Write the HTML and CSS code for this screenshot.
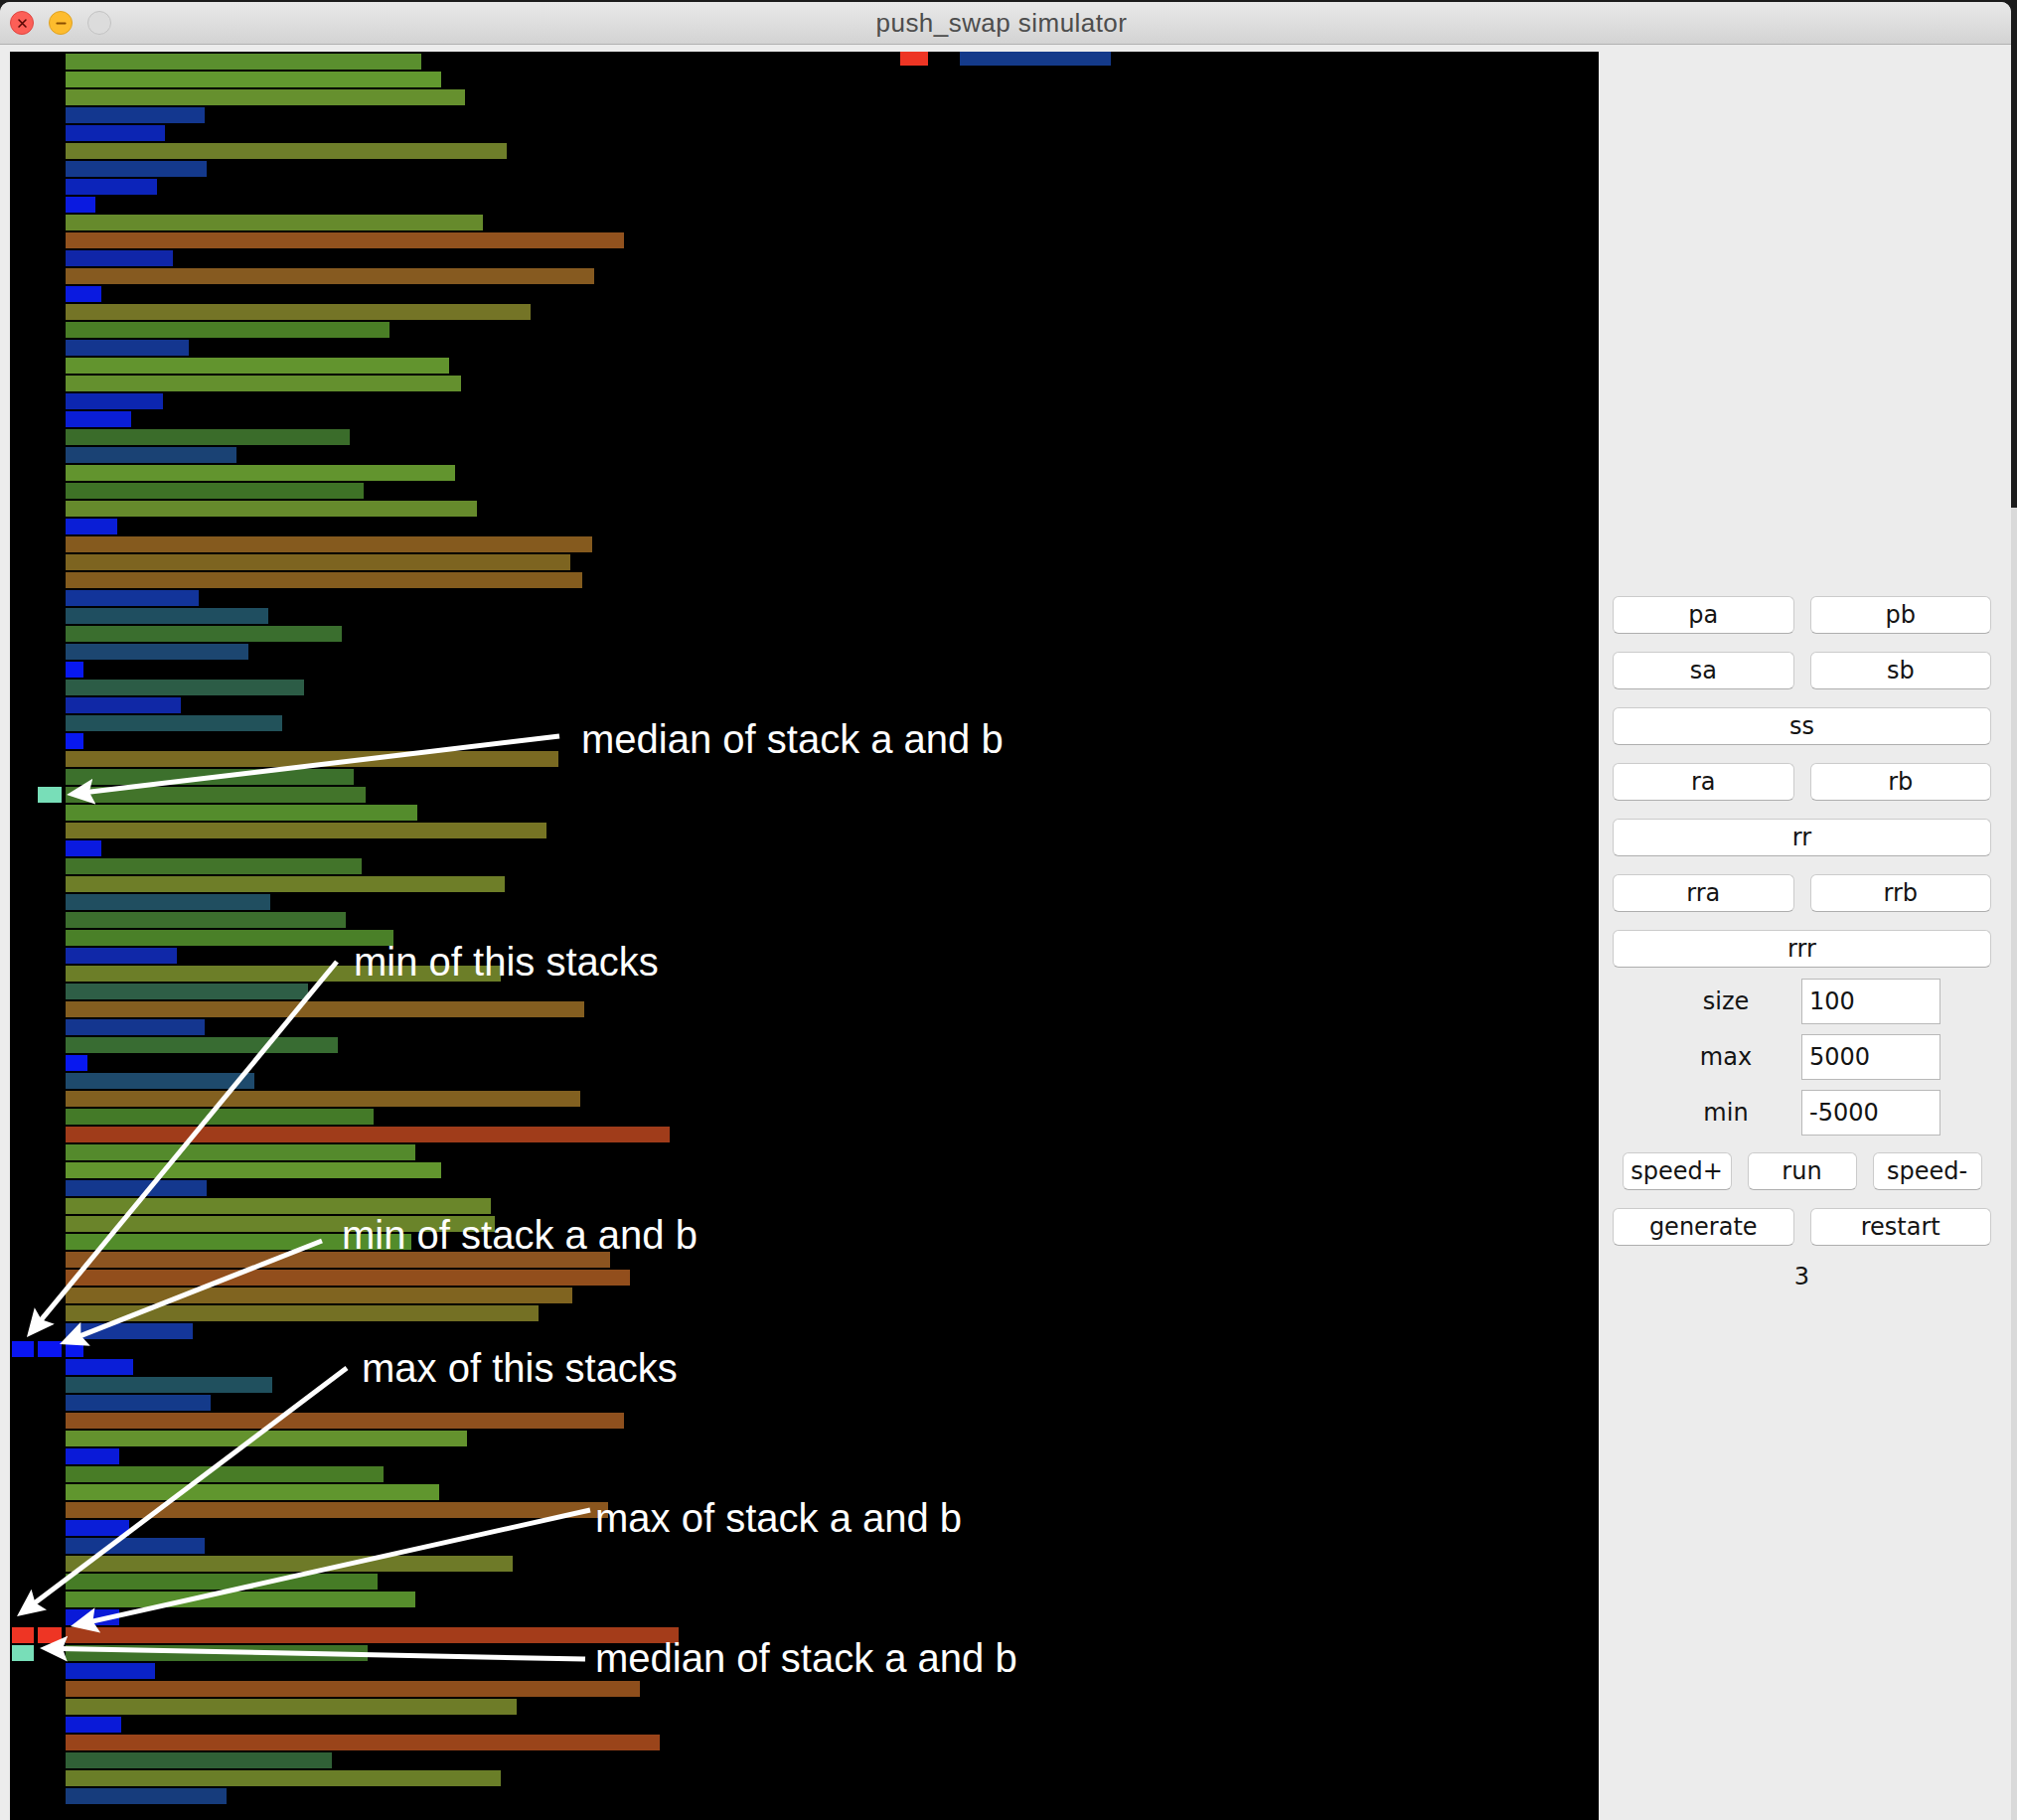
FILE: index.html
```html
<!DOCTYPE html>
<html lang="en">
<head>
<meta charset="utf-8">
<title>push_swap simulator</title>
<link rel="stylesheet" href="styles.css">
</head>
<body>
<div class="window">
  <header class="titlebar">
    <div class="lights">
      <span class="light light-close"><svg viewBox="0 0 12 12" width="13" height="13"><path d="M2.8 2.8 L9.2 9.2 M9.2 2.8 L2.8 9.2" stroke="#5a0805" stroke-width="1.5" stroke-linecap="round"/></svg></span>
      <span class="light light-min"><svg viewBox="0 0 12 12" width="13" height="13"><path d="M2.2 6 H9.8" stroke="#8a4d00" stroke-width="1.8" stroke-linecap="round"/></svg></span>
      <span class="light light-zoom"></span>
    </div>
    <div class="title">push_swap simulator</div>
    <div></div>
  </header>
  <div class="content">
    <div class="canvas">
      <div class="stack stack-a">
        <div class="row"><b class="bar" style="width:358px;background:#5a8f2e"></b></div>
        <div class="row"><b class="bar" style="width:378px;background:#62992f"></b></div>
        <div class="row"><b class="bar" style="width:402px;background:#66902e"></b></div>
        <div class="row"><b class="bar" style="width:140px;background:#13378f"></b></div>
        <div class="row"><b class="bar" style="width:100px;background:#0c25b3"></b></div>
        <div class="row"><b class="bar" style="width:444px;background:#6e7e2a"></b></div>
        <div class="row"><b class="bar" style="width:142px;background:#14398c"></b></div>
        <div class="row"><b class="bar" style="width:92px;background:#0c24ba"></b></div>
        <div class="row"><b class="bar" style="width:30px;background:#0a1ae0"></b></div>
        <div class="row"><b class="bar" style="width:420px;background:#668a2c"></b></div>
        <div class="row"><b class="bar" style="width:562px;background:#92521e"></b></div>
        <div class="row"><b class="bar" style="width:108px;background:#1026a8"></b></div>
        <div class="row"><b class="bar" style="width:532px;background:#865a20"></b></div>
        <div class="row"><b class="bar" style="width:36px;background:#0a1ae0"></b></div>
        <div class="row"><b class="bar" style="width:468px;background:#747426"></b></div>
        <div class="row"><b class="bar" style="width:326px;background:#4a7e26"></b></div>
        <div class="row"><b class="bar" style="width:124px;background:#14368f"></b></div>
        <div class="row"><b class="bar" style="width:386px;background:#62942e"></b></div>
        <div class="row"><b class="bar" style="width:398px;background:#64902e"></b></div>
        <div class="row"><b class="bar" style="width:98px;background:#0c26b0"></b></div>
        <div class="row"><b class="bar" style="width:66px;background:#0a1ed6"></b></div>
        <div class="row"><b class="bar" style="width:286px;background:#3a6c2a"></b></div>
        <div class="row"><b class="bar" style="width:172px;background:#1a4274"></b></div>
        <div class="row"><b class="bar" style="width:392px;background:#62942e"></b></div>
        <div class="row"><b class="bar" style="width:300px;background:#3e7226"></b></div>
        <div class="row"><b class="bar" style="width:414px;background:#668a2c"></b></div>
        <div class="row"><b class="bar" style="width:52px;background:#0a1ed6"></b></div>
        <div class="row"><b class="bar" style="width:530px;background:#855a1e"></b></div>
        <div class="row"><b class="bar" style="width:508px;background:#7d6420"></b></div>
        <div class="row"><b class="bar" style="width:520px;background:#845c1e"></b></div>
        <div class="row"><b class="bar" style="width:134px;background:#12349a"></b></div>
        <div class="row"><b class="bar" style="width:204px;background:#1f4e60"></b></div>
        <div class="row"><b class="bar" style="width:278px;background:#3a6e2e"></b></div>
        <div class="row"><b class="bar" style="width:184px;background:#1c4670"></b></div>
        <div class="row"><b class="bar" style="width:18px;background:#0818f0"></b></div>
        <div class="row"><b class="bar" style="width:240px;background:#2c5c46"></b></div>
        <div class="row"><b class="bar" style="width:116px;background:#1028a6"></b></div>
        <div class="row"><b class="bar" style="width:218px;background:#22525a"></b></div>
        <div class="row"><b class="bar" style="width:18px;background:#0818f0"></b></div>
        <div class="row"><b class="bar" style="width:496px;background:#7a6a22"></b></div>
        <div class="row"><b class="bar" style="width:290px;background:#3c702c"></b></div>
        <div class="row"><i class="mark m2 med"></i><b class="bar" style="width:302px;background:#42742a"></b></div>
        <div class="row"><b class="bar" style="width:354px;background:#548c2c"></b></div>
        <div class="row"><b class="bar" style="width:484px;background:#767424"></b></div>
        <div class="row"><b class="bar" style="width:36px;background:#0a1ae0"></b></div>
        <div class="row"><b class="bar" style="width:298px;background:#42742a"></b></div>
        <div class="row"><b class="bar" style="width:442px;background:#6e7e28"></b></div>
        <div class="row"><b class="bar" style="width:206px;background:#204e60"></b></div>
        <div class="row"><b class="bar" style="width:282px;background:#3c6e2e"></b></div>
        <div class="row"><b class="bar" style="width:330px;background:#4a8028"></b></div>
        <div class="row"><b class="bar" style="width:112px;background:#1028a8"></b></div>
        <div class="row"><b class="bar" style="width:438px;background:#6c7e28"></b></div>
        <div class="row"><b class="bar" style="width:244px;background:#2e5e46"></b></div>
        <div class="row"><b class="bar" style="width:522px;background:#845e20"></b></div>
        <div class="row"><b class="bar" style="width:140px;background:#14368f"></b></div>
        <div class="row"><b class="bar" style="width:274px;background:#386c32"></b></div>
        <div class="row"><b class="bar" style="width:22px;background:#0818f0"></b></div>
        <div class="row"><b class="bar" style="width:190px;background:#1e4a6c"></b></div>
        <div class="row"><b class="bar" style="width:518px;background:#826020"></b></div>
        <div class="row"><b class="bar" style="width:310px;background:#447a28"></b></div>
        <div class="row"><b class="bar" style="width:608px;background:#a03c1a"></b></div>
        <div class="row"><b class="bar" style="width:352px;background:#548a2c"></b></div>
        <div class="row"><b class="bar" style="width:378px;background:#62962e"></b></div>
        <div class="row"><b class="bar" style="width:142px;background:#14388e"></b></div>
        <div class="row"><b class="bar" style="width:428px;background:#6a862a"></b></div>
        <div class="row"><b class="bar" style="width:432px;background:#6a842a"></b></div>
        <div class="row"><b class="bar" style="width:348px;background:#528c2a"></b></div>
        <div class="row"><b class="bar" style="width:548px;background:#8c5420"></b></div>
        <div class="row"><b class="bar" style="width:568px;background:#924e1c"></b></div>
        <div class="row"><b class="bar" style="width:510px;background:#806420"></b></div>
        <div class="row"><b class="bar" style="width:476px;background:#747024"></b></div>
        <div class="row"><b class="bar" style="width:128px;background:#14369a"></b></div>
        <div class="row"><i class="mark m1 min"></i><i class="mark m2 min"></i><b class="bar" style="width:18px;background:#0818f0"></b></div>
        <div class="row"><b class="bar" style="width:68px;background:#0a1ed8"></b></div>
        <div class="row"><b class="bar" style="width:208px;background:#20505e"></b></div>
        <div class="row"><b class="bar" style="width:146px;background:#143a8a"></b></div>
        <div class="row"><b class="bar" style="width:562px;background:#8e501e"></b></div>
        <div class="row"><b class="bar" style="width:404px;background:#64922e"></b></div>
        <div class="row"><b class="bar" style="width:54px;background:#0a1ad8"></b></div>
        <div class="row"><b class="bar" style="width:320px;background:#487c26"></b></div>
        <div class="row"><b class="bar" style="width:376px;background:#60962e"></b></div>
        <div class="row"><b class="bar" style="width:546px;background:#8a561e"></b></div>
        <div class="row"><b class="bar" style="width:64px;background:#0a1ed8"></b></div>
        <div class="row"><b class="bar" style="width:140px;background:#13378f"></b></div>
        <div class="row"><b class="bar" style="width:450px;background:#6e7a28"></b></div>
        <div class="row"><b class="bar" style="width:314px;background:#467c26"></b></div>
        <div class="row"><b class="bar" style="width:352px;background:#568e2c"></b></div>
        <div class="row"><b class="bar" style="width:54px;background:#0a1ad8"></b></div>
        <div class="row"><i class="mark m1 max"></i><i class="mark m2 max"></i><b class="bar" style="width:617px;background:#a43c1a"></b></div>
        <div class="row"><i class="mark m1 med"></i><b class="bar" style="width:304px;background:#3e7228"></b></div>
        <div class="row"><b class="bar" style="width:90px;background:#0a22c8"></b></div>
        <div class="row"><b class="bar" style="width:578px;background:#8e4e1c"></b></div>
        <div class="row"><b class="bar" style="width:454px;background:#6e7c28"></b></div>
        <div class="row"><b class="bar" style="width:56px;background:#0a1ad8"></b></div>
        <div class="row"><b class="bar" style="width:598px;background:#9a441a"></b></div>
        <div class="row"><b class="bar" style="width:268px;background:#306036"></b></div>
        <div class="row"><b class="bar" style="width:438px;background:#6a7e28"></b></div>
        <div class="row"><b class="bar" style="width:162px;background:#163c7c"></b></div>
      </div>
      <div class="stack stack-b">
        <div class="row-b"><i class="mark-b max"></i><b class="bar" style="width:152px;background:#143a8a"></b></div>
      </div>

      <svg class="arrows" viewBox="0 0 1599 1780" width="1599" height="1780" aria-hidden="true">
        <defs>
          <marker id="head" markerUnits="userSpaceOnUse" markerWidth="30" markerHeight="28" refX="8" refY="13" orient="auto">
            <path d="M0 0 L28 13 L0 26 L5 13 Z" fill="#fff"/>
          </marker>
        </defs>
        <g stroke="#fff" stroke-width="5" marker-end="url(#head)">
          <line x1="553" y1="689" x2="76.9" y2="745.6"/>
          <line x1="329" y1="916" x2="29.7" y2="1278.6"/>
          <line x1="314" y1="1197" x2="68.6" y2="1293.7"/>
          <line x1="339" y1="1325" x2="23" y2="1563"/>
          <line x1="584" y1="1468" x2="80.5" y2="1580.6"/>
          <line x1="579" y1="1618" x2="50" y2="1607.4"/>
        </g>
      </svg>
      <div class="note note-med-top">median of stack a and b</div>
      <div class="note note-min-this">min of this stacks</div>
      <div class="note note-min-ab">min of stack a and b</div>
      <div class="note note-max-this">max of this stacks</div>
      <div class="note note-max-ab">max of stack a and b</div>
      <div class="note note-med-bot">median of stack a and b</div>
    </div>

    <aside class="panel">
      <div class="ops">
        <button class="btn">pa</button>
        <button class="btn">pb</button>
        <button class="btn">sa</button>
        <button class="btn">sb</button>
        <button class="btn wide">ss</button>
        <button class="btn">ra</button>
        <button class="btn">rb</button>
        <button class="btn wide">rr</button>
        <button class="btn">rra</button>
        <button class="btn">rrb</button>
        <button class="btn wide">rrr</button>
      </div>
      <div class="fields">
        <label class="field"><span class="field-label">size</span><input class="inp" value="100"></label>
        <label class="field"><span class="field-label">max</span><input class="inp" value="5000"></label>
        <label class="field"><span class="field-label">min</span><input class="inp" value="-5000"></label>
      </div>
      <div class="speed">
        <button class="btn small">speed+</button>
        <button class="btn small">run</button>
        <button class="btn small">speed-</button>
      </div>
      <div class="gen">
        <button class="btn">generate</button>
        <button class="btn">restart</button>
      </div>
      <div class="count">3</div>
    </aside>
  </div>
</div>
</body>
</html>
```

FILE: styles.css
```css
html, body {
  margin: 0;
  padding: 0;
}
body {
  width: 2030px;
  height: 1832px;
  overflow: hidden;
  display: flex;
  background: linear-gradient(#1c1c1c 0 511px, #d9d9d9 511px);
  font-family: "DejaVu Sans", "Liberation Sans", sans-serif;
}
.window {
  width: 2024px;
  height: 1830px;
  margin-top: 2px;
  background: #ececec;
  border-radius: 10px 10px 0 0;
  overflow: hidden;
  display: flex;
  flex-direction: column;
}
.titlebar {
  flex: none;
  height: 42px;
  border-bottom: 1px solid #b1b1b1;
  background: linear-gradient(#e9e9e9, #d3d3d3);
  display: grid;
  grid-template-columns: 1fr auto 1fr;
  align-items: center;
}
.lights {
  display: flex;
  gap: 15px;
  padding-left: 10px;
}
.light {
  width: 24px;
  height: 24px;
  border-radius: 50%;
  box-sizing: border-box;
  display: flex;
  align-items: center;
  justify-content: center;
}
.light-close { background: #fc5f57; border: 1px solid #de4640; }
.light-min { background: #fdbc2e; border: 1px solid #dea123; }
.light-zoom { background: #dcdcdc; border: 1px solid #c2c2c2; }
.title {
  font-family: "Liberation Sans", Arial, sans-serif;
  font-size: 26px;
  color: #4d4d4d;
  letter-spacing: 0.45px;
  margin-right: 8px;
}
.content {
  flex: 1;
  display: flex;
  padding: 7px 0 0 10px;
  min-height: 0;
}
.canvas {
  width: 1599px;
  flex: none;
  background: #000;
  position: relative;
  overflow: hidden;
  display: flex;
  align-items: flex-start;
}
.stack {
  display: flex;
  flex-direction: column;
  gap: 2px;
}
.stack-a {
  width: 894px;
  padding: 2px 0 0 2px;
}
.stack-b {
  margin-top: -2px;
}
.row {
  display: grid;
  grid-template-columns: 22px 24px auto;
  column-gap: 4px;
  height: 16px;
}
.bar {
  display: block;
  height: 16px;
  grid-row: 1;
  grid-column: 3;
}
.mark {
  display: block;
  height: 16px;
  grid-row: 1;
}
.m1 { grid-column: 1; }
.m2 { grid-column: 2; }
.min { background: #0a16f2; }
.max { background: #ee3524; }
.med { background: #78deb8; }
.row-b {
  display: flex;
  gap: 32px;
  height: 16px;
}
.mark-b {
  display: block;
  width: 28px;
  height: 16px;
}
.arrows {
  position: absolute;
  left: 0;
  top: 0;
  pointer-events: none;
}
.note {
  position: absolute;
  color: #fff;
  font-family: "Liberation Sans", Arial, sans-serif;
  font-size: 40px;
  line-height: 40px;
  white-space: nowrap;
}
.note-med-top { left: 575px; top: 672px; }
.note-min-this { left: 346px; top: 896px; }
.note-min-ab { left: 334px; top: 1171px; }
.note-max-this { left: 354px; top: 1305px; }
.note-max-ab { left: 589px; top: 1456px; }
.note-med-bot { left: 589px; top: 1597px; }

.panel {
  flex: 1;
  padding: 548px 20px 0 14px;
  display: flex;
  flex-direction: column;
  font-size: 24px;
  color: #141414;
}
.btn {
  font-family: "DejaVu Sans", sans-serif;
  font-size: 24px;
  color: #141414;
  background: #fff;
  border: 1px solid #cbcbcb;
  border-bottom-color: #aeaeae;
  border-radius: 6px;
  height: 38px;
  padding: 0;
  margin: 0;
  box-sizing: border-box;
  line-height: 34px;
}
.ops {
  display: grid;
  grid-template-columns: 1fr 1fr;
  column-gap: 16px;
  row-gap: 18px;
}
.wide { grid-column: span 2; }
.fields {
  margin-top: 11px;
  display: flex;
  flex-direction: column;
  gap: 10px;
}
.field {
  display: grid;
  grid-template-columns: 152px 140px;
  margin-left: 38px;
  align-items: center;
}
.field-label {
  text-align: center;
}
.inp {
  width: 140px;
  height: 46px;
  box-sizing: border-box;
  border: 1px solid #b9b9b9;
  border-radius: 0;
  background: #fff;
  padding: 0 7px;
  margin: 0;
  font-family: "DejaVu Sans", sans-serif;
  font-size: 24px;
  color: #141414;
}
.speed {
  margin-top: 17px;
  display: flex;
  justify-content: center;
  gap: 16px;
}
.small { width: 110px; }
.gen {
  margin-top: 18px;
  display: grid;
  grid-template-columns: 1fr 1fr;
  column-gap: 16px;
}
.count {
  margin-top: 16px;
  text-align: center;
  line-height: 30px;
}
```
